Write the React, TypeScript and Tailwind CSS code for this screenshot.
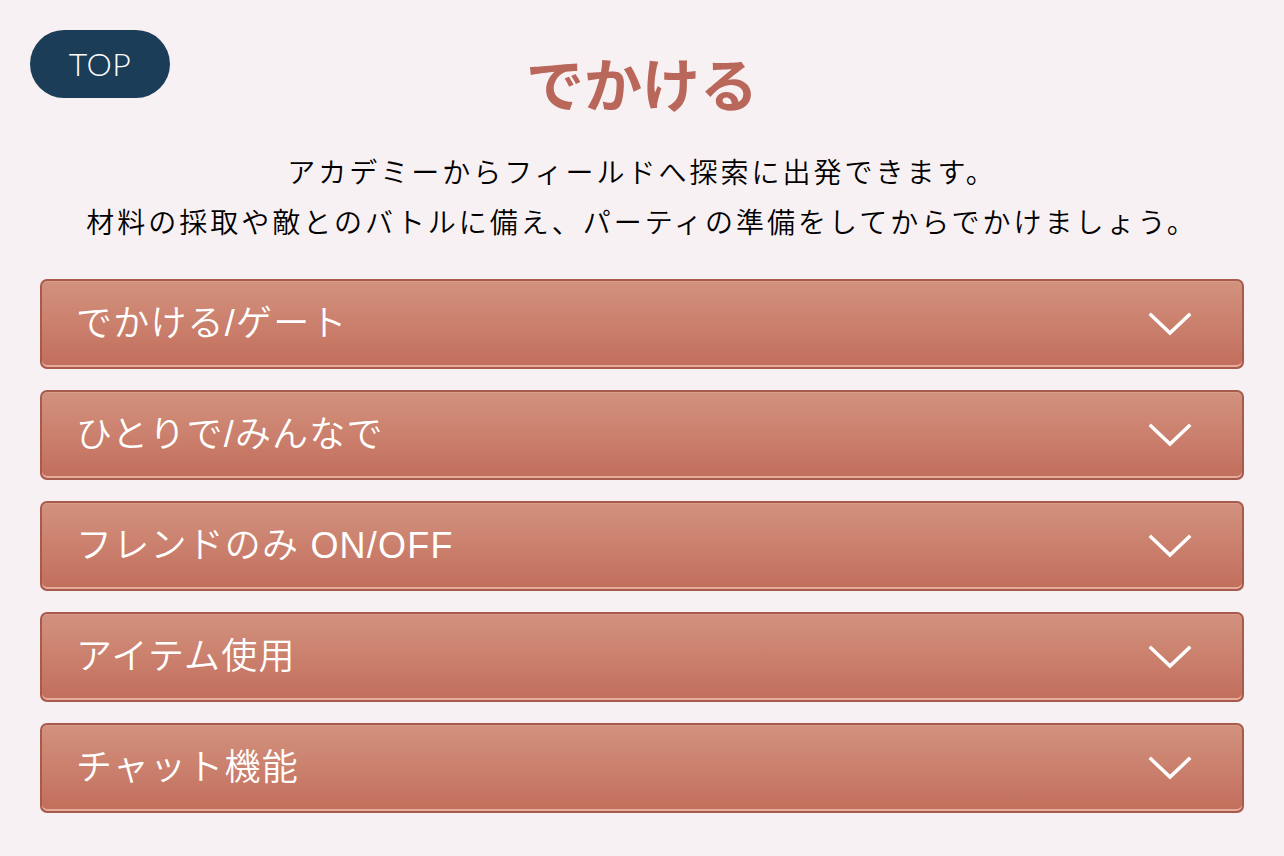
import React, { useState } from 'react';

const sections = [
  { id: 'gate', label: 'でかける/ゲート' },
  { id: 'party', label: 'ひとりで/みんなで' },
  { id: 'friend', label: 'フレンドのみ ON/OFF' },
  { id: 'item', label: 'アイテム使用' },
  { id: 'chat', label: 'チャット機能' },
];

const Chevron = () => (
  <svg width="44" height="26" viewBox="0 0 44 26" fill="none">
    <path d="M3 4 L22 22 L41 4" stroke="white" strokeWidth="3.5" strokeLinecap="square" strokeLinejoin="miter" />
  </svg>
);

export default function App() {
  const [open, setOpen] = useState<string | null>(null);

  return (
    <div
      className="relative min-h-[856px] w-full bg-[#f8f1f3] px-10 pb-10"
      style={{ fontFamily: '"Noto Sans CJK JP", "Noto Sans", sans-serif' }}
    >
      {/* top pill */}
      <button
        className="absolute left-[30px] top-[30px] flex h-[68px] w-[140px] items-center justify-center rounded-full bg-[#1b3d58] text-[32px] font-light tracking-[0.5px] text-white"
        style={{ fontFamily: 'Lato, "Noto Sans", sans-serif' }}
      >
        TOP
      </button>

      <h1 className="pt-[46px] text-center text-[58px] font-bold leading-[72px] text-[#b9675a]">でかける</h1>

      <div className="mt-[28px] text-center text-[28px] font-[350] leading-[50px] tracking-[3px] text-black">
        <p>アカデミーからフィールドへ探索に出発できます。</p>
        <p>材料の採取や敵とのバトルに備え、パーティの準備をしてからでかけましょう。</p>
      </div>

      <div className="mt-[33px] flex flex-col gap-[21px]">
        {sections.map((s) => (
          <button
            key={s.id}
            onClick={() => setOpen(open === s.id ? null : s.id)}
            className="flex h-[90px] w-full items-center justify-between rounded-[7px] border-2 border-[#a85b4d] bg-gradient-to-b from-[#d2927e] to-[#c26e5c] pl-[34px] pr-[50px] text-left shadow-[inset_0_-2px_0_#e6ab9a,inset_0_1px_0_#d89e8b]"
          >
            <span
              className="text-[36px] font-[350] leading-none tracking-[1.2px] text-white"
              style={{ fontFamily: '"Liberation Sans", "Noto Sans CJK JP", sans-serif' }}
            >
              {s.label}
            </span>
            <Chevron />
          </button>
        ))}
      </div>
    </div>
  );
}
